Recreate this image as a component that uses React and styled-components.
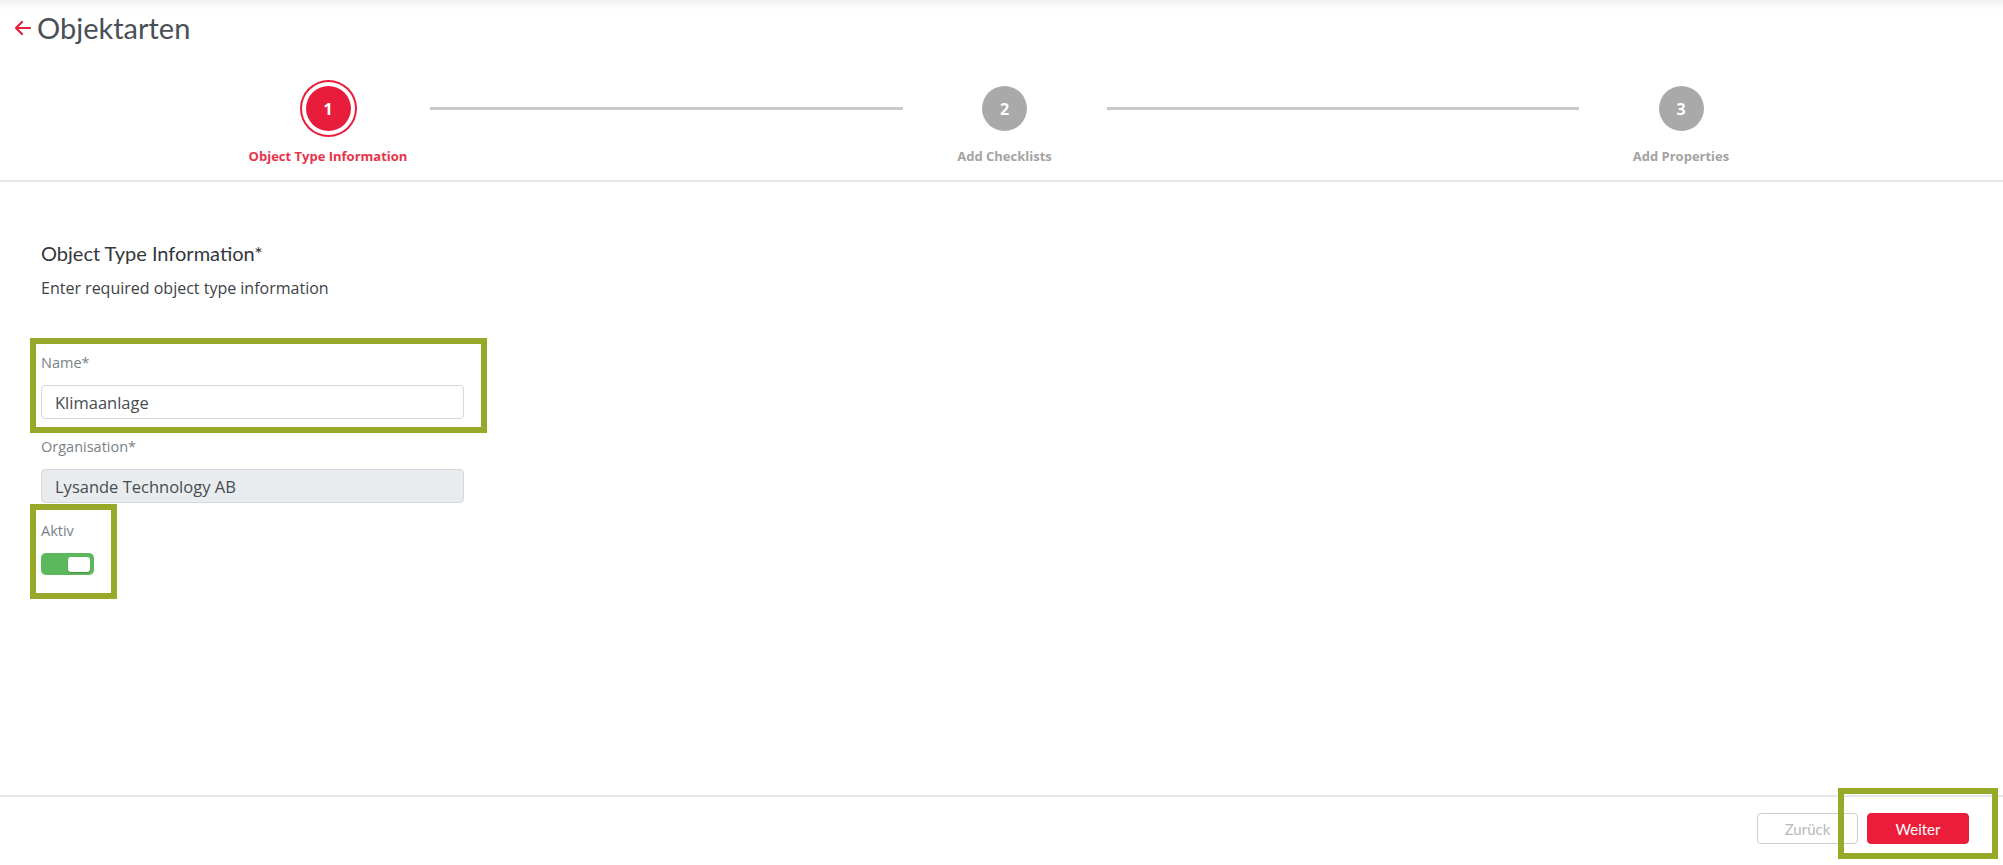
import React from 'react'
import styled, { createGlobalStyle } from 'styled-components'

const GlobalStyle = createGlobalStyle`
  body {
    margin: 0;
    background: #fff;
    font-family: 'Open Sans', 'Lato', sans-serif;
  }
`

const Page = styled.div`
  position: relative;
  min-height: 865px;
  display: flex;
  flex-direction: column;
`

const Header = styled.header`
  height: 182px;
  border-bottom: 2px solid #e4e8ec;
  background: linear-gradient(#f1f1f1, #fff 10px);
  box-sizing: border-box;
`

const TitleRow = styled.div`
  display: flex;
  align-items: center;
  gap: 6px;
  padding: 10px 0 0 14px;
  height: 36px;
`

const BackArrow = styled.svg`
  width: 17px;
  height: 16px;
  color: #e8203c;
`

const Title = styled.h1`
  margin: 0;
  font-family: 'Lato', sans-serif;
  font-size: 29px;
  font-weight: 400;
  color: #4a4f55;
  line-height: 36px;
`

const Stepper = styled.div`
  display: flex;
  align-items: flex-start;
  padding: 34px 220px 0 226px;
`

const Step = styled.div`
  width: 204px;
  display: flex;
  flex-direction: column;
  align-items: center;
`

const CircleSlot = styled.div`
  width: 57px;
  height: 57px;
  display: flex;
  align-items: center;
  justify-content: center;
`

const Circle = styled.div`
  width: 45px;
  height: 45px;
  border-radius: 50%;
  display: flex;
  align-items: center;
  justify-content: center;
  font-size: 16px;
  font-weight: 700;
  color: #fff;
  background: ${p => (p.$active ? '#e81d3b' : '#a9a9a9')};
  box-shadow: ${p => (p.$active ? '0 0 0 4px #fff, 0 0 0 6px #e81d3b' : 'none')};
`

const StepLabel = styled.div`
  margin-top: 10px;
  font-size: 13px;
  line-height: 18px;
  font-weight: 700;
  color: ${p => (p.$active ? '#e8334a' : '#a3a3a3')};
  white-space: nowrap;
`

const Connector = styled.div`
  flex: 1;
  height: 3px;
  margin-top: 27px;
  background: #c9c9c9;
`

const Main = styled.main`
  flex: 1;
  padding: 58px 0 0 41px;
`

const SectionTitle = styled.h2`
  margin: 0;
  font-family: 'Lato', sans-serif;
  font-size: 20px;
  line-height: 26px;
  font-weight: 400;
  color: #33373c;
`

const SectionHint = styled.p`
  margin: 12px 0 0;
  font-size: 16px;
  line-height: 20px;
  color: #3d4247;
`

const Fields = styled.div`
  margin-top: 56px;
  display: flex;
  flex-direction: column;
  gap: 19px;
  width: 423px;
`

const Field = styled.div`
  position: relative;
  display: flex;
  flex-direction: column;
  align-items: flex-start;
  gap: 13px;
`

const Label = styled.label`
  font-size: 14.5px;
  line-height: 18px;
  color: #7a7f85;
`

const Input = styled.input`
  box-sizing: border-box;
  width: 423px;
  height: 34px;
  padding: 0 13px;
  border: 1px solid #d5d9de;
  border-radius: 4px;
  font-family: 'Open Sans', sans-serif;
  font-size: 16.5px;
  color: #474c52;
  background: ${p => (p.disabled ? '#e9ecef' : '#fff')};
  outline: none;
`

const Toggle = styled.div`
  box-sizing: border-box;
  width: 53px;
  height: 22px;
  padding: 4px 4px 3px;
  border-radius: 5px;
  background: #5cb85c;
  display: flex;
  justify-content: flex-end;
`

const Knob = styled.span`
  width: 22px;
  height: 15px;
  border-radius: 3px;
  background: #fff;
  box-shadow: 0 1px 1px rgba(0, 0, 0, 0.25);
`

const Footer = styled.footer`
  border-top: 2px solid #e4e8ec;
  padding: 16px 34px 21px;
  display: flex;
  justify-content: flex-end;
  gap: 9px;
`

const ButtonWrap = styled.div`
  position: relative;
`

const Button = styled.button`
  box-sizing: border-box;
  width: ${p => p.$width};
  height: 31px;
  border-radius: 4px;
  font-family: 'Lato', sans-serif;
  font-size: 15px;
  cursor: pointer;
  border: 1px solid ${p => (p.$primary ? '#ec1c3b' : '#cdcdcd')};
  background: ${p => (p.$primary ? '#ec1c3b' : '#fff')};
  color: ${p => (p.$primary ? '#fff' : '#b9b9b9')};
`

const Highlight = styled.div`
  position: absolute;
  box-sizing: border-box;
  inset: ${p => p.$inset};
  border: 6px solid #98a92a;
  pointer-events: none;
`

const steps = ['Object Type Information', 'Add Checklists', 'Add Properties']

export default function App() {
  return (
    <Page>
      <GlobalStyle />
      <Header>
        <TitleRow>
          <BackArrow viewBox="0 0 17 16" fill="none" stroke="currentColor" strokeWidth="2.2" strokeLinecap="round" strokeLinejoin="round">
            <path d="M16 8H2M8 2L2 8l6 6" />
          </BackArrow>
          <Title>Objektarten</Title>
        </TitleRow>
        <Stepper>
          {steps.map((label, i) => (
            <React.Fragment key={label}>
              {i > 0 && <Connector />}
              <Step>
                <CircleSlot>
                  <Circle $active={i === 0}>{i + 1}</Circle>
                </CircleSlot>
                <StepLabel $active={i === 0}>{label}</StepLabel>
              </Step>
            </React.Fragment>
          ))}
        </Stepper>
      </Header>

      <Main>
        <SectionTitle>Object Type Information*</SectionTitle>
        <SectionHint>Enter required object type information</SectionHint>
        <Fields>
          <Field>
            <Label>Name*</Label>
            <Input defaultValue="Klimaanlage" />
            <Highlight $inset="-16px -23px -14px -11px" />
          </Field>
          <Field>
            <Label>Organisation*</Label>
            <Input defaultValue="Lysande Technology AB" disabled />
          </Field>
          <Field>
            <Label>Aktiv</Label>
            <Toggle>
              <Knob />
            </Toggle>
            <Highlight $inset="-18px 347px -24px -11px" />
          </Field>
        </Fields>
      </Main>

      <Footer>
        <Button $width="101px">Zurück</Button>
        <ButtonWrap>
          <Button $primary $width="102px">Weiter</Button>
          <Highlight $inset="-25px -29px -15px -29px" />
        </ButtonWrap>
      </Footer>
    </Page>
  )
}
